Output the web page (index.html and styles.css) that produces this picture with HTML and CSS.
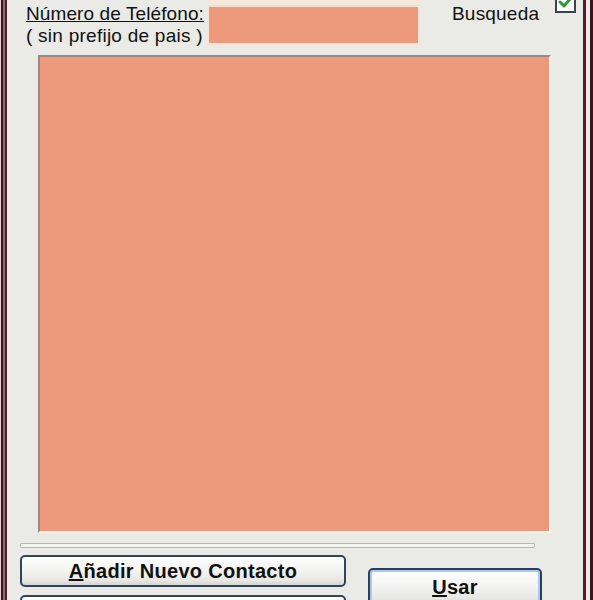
FILE: index.html
```html
<!DOCTYPE html>
<html lang="es">
<head>
    <meta charset="UTF-8">
    <meta name="viewport" content="width=device-width, initial-scale=1.0">
    <title>Contactos</title>
    <link rel="stylesheet" href="styles.css">
</head>
<body>
    <div class="window">
        <div class="top-row">
            <div class="labels">
                <div class="label-main">Número de Teléfono:</div>
                <div class="label-sub">( sin prefijo de pais )</div>
            </div>
            <div class="fields">
                <div class="field-prev"></div>
                <div class="field-phone"></div>
            </div>
            <div class="search">
                <span class="search-label">Busqueda</span>
                <span class="checkbox">
                    <svg width="17" height="17" viewBox="0 0 17 17">
                        <path d="M3 8 L7 12 L14 4" fill="none" stroke="#2f9a33" stroke-width="3" stroke-linecap="round" stroke-linejoin="round"/>
                    </svg>
                </span>
            </div>
        </div>

        <div class="contact-list"></div>

        <div class="progress"></div>

        <div class="actions">
            <div class="action-col">
                <button class="btn"><u>A</u>ñadir Nuevo Contacto</button>
                <button class="btn"></button>
            </div>
            <button class="btn btn-default"><u>U</u>sar</button>
        </div>
    </div>
</body>
</html>
```

FILE: styles.css
```css
* {
    box-sizing: border-box;
}

body {
    margin: 0;
    font-family: "Liberation Sans", Arial, sans-serif;
    color: #111;
    overflow: hidden;
}

.window {
    width: 593px;
    height: 600px;
    background-color: #eaeae6;
    overflow: hidden;
    box-shadow:
        inset 1px 0 #e6d2d4,
        inset 3px 0 #3a1620,
        inset 5px 0 #8e6a72,
        inset 7px 0 #4a1e2a,
        inset 10px 0 #f4e6e6,
        inset -3px 0 #3a1620,
        inset -7px 0 #f4e6e6,
        inset -10px 0 #4a1e2a;
}

.top-row {
    display: flex;
    align-items: flex-start;
    padding-left: 26px;
    height: 45px;
}

.labels {
    width: 177px;
    margin-right: 4px;
    padding-top: 3px;
    font-size: 19px;
    line-height: 22px;
    white-space: nowrap;
}

.label-main {
    text-decoration: underline;
    letter-spacing: 0.1px;
}

.label-sub {
    letter-spacing: 0.25px;
}

.fields {
    width: 213px;
}

.field-prev {
    height: 3px;
    background-color: #f8e6d8;
}

.field-phone {
    margin-top: 2px;
    height: 40px;
    background-color: #ed997b;
    border: 2px solid #fbe4d6;
    border-top-color: #f6dccc;
}

.search {
    display: flex;
    align-items: flex-start;
    margin-left: 32px;
}

.search-label {
    padding-top: 3px;
    font-size: 19px;
    line-height: 22px;
    letter-spacing: 0.2px;
}

.checkbox {
    display: flex;
    align-items: center;
    justify-content: center;
    width: 21px;
    height: 21px;
    margin-top: -8px;
    margin-left: 16px;
    background-color: #fff;
    border: 2px solid #3a4350;
}

.contact-list {
    margin: 10px 0 0 38px;
    width: 513px;
    height: 478px;
    background-color: #ed997b;
    border: 2px solid #fdf0e6;
    border-top-color: #978a82;
    border-left-color: #978a82;
}

.progress {
    margin: 10px 0 0 20px;
    width: 515px;
    height: 5px;
    background-color: #f3f3ef;
    border: 1px solid #b6b6b2;
    border-radius: 1px;
}

.actions {
    display: flex;
    align-items: flex-start;
    margin-top: 7px;
    padding-left: 20px;
}

.action-col {
    display: flex;
    flex-direction: column;
    gap: 8px;
    width: 326px;
}

.btn {
    height: 32px;
    padding: 0;
    font-family: "Liberation Sans", Arial, sans-serif;
    font-size: 20px;
    font-weight: bold;
    letter-spacing: 0.3px;
    color: #111;
    border: 2px solid #33435a;
    border-radius: 5px;
    background: linear-gradient(#ffffff, #f4f4f2 45%, #e6e6e2 85%, #d4d4d0);
}

.btn u {
    text-decoration-thickness: 2px;
}

.btn-default {
    width: 174px;
    height: 38px;
    margin: 13px 0 0 22px;
    border-color: #2c3e58;
    box-shadow: inset 0 0 0 2px #a9c9ef;
}
```
